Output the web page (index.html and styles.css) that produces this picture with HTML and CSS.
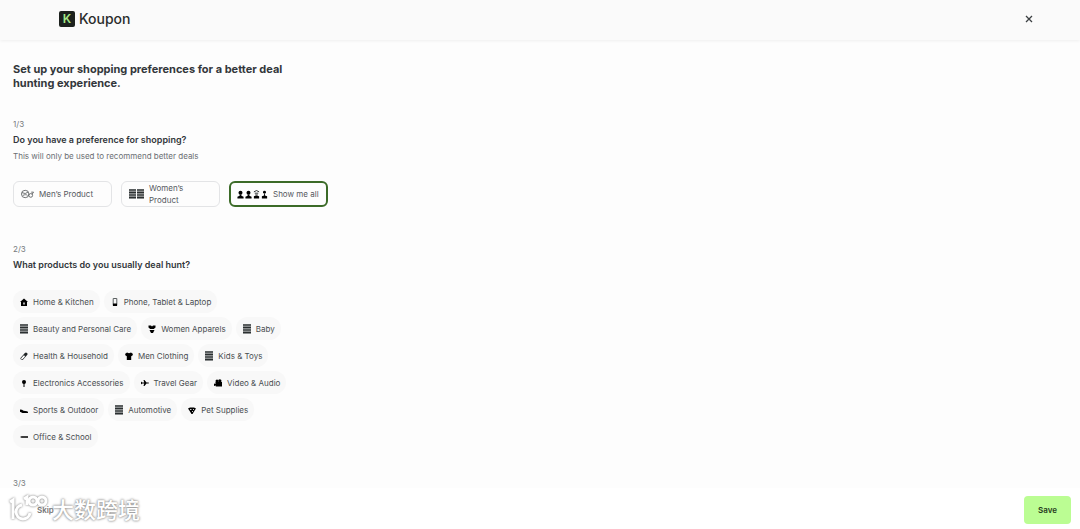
FILE: index.html
```html
<!DOCTYPE html>
<html lang="en">
<head>
    <meta charset="UTF-8">
    <meta name="viewport" content="width=device-width, initial-scale=1.0">
    <title>Koupon - Shopping preferences</title>
    <link rel="stylesheet" href="styles.css">
</head>
<body>
    <!-- shared icons -->
    <svg class="sprite" aria-hidden="true">
        <symbol id="stack" viewBox="0 0 8 10">
            <rect width="8" height="10" fill="#8b8e8f"/>
            <path d="M0 1h8M0 3.500h8M0 6h8M0 8.500h8" stroke="#2a2f30" stroke-width="1.2"/>
        </symbol>
        <symbol id="person" viewBox="0 0 8 10">
            <circle cx="4" cy="3" r="2.300"/>
            <path d="M3 5h2v1.500l2.500 1V9.500H.5v-2l2.500-1z"/>
        </symbol>
    </svg>

    <header class="header">
        <a class="logo" href="#">
            <svg class="logo-mark" viewBox="0 0 16 16" aria-hidden="true">
                <rect width="16" height="16" rx="2" fill="#1c211d"/>
                <text class="logo-letter" x="8" y="12" text-anchor="middle">K</text>
            </svg>
            <span class="logo-name">Koupon</span>
        </a>
        <button class="close" type="button" aria-label="Close">
            <svg viewBox="0 0 8 8"><path d="M1 1l6 6M7 1L1 7" stroke="#3c4043" stroke-width="1.3"/></svg>
        </button>
    </header>

    <main class="content">
        <h1>Set up your shopping preferences for a better deal hunting experience.</h1>

        <section class="step">
            <p class="count">1/3</p>
            <h2>Do you have a preference for shopping?</h2>
            <p class="note">This will only be used to recommend better deals</p>
            <div class="options">
                <button class="option" type="button">
                    <svg class="icon-men" viewBox="0 0 14 10" fill="none" stroke="#55595c" stroke-width="0.9">
                        <circle cx="4.500" cy="5" r="4"/>
                        <path d="M1 3.500l3.500 1 3-1.500M2 6.500c2-1 4-1 5 0"/>
                        <circle cx="10.500" cy="6.500" r="2"/>
                        <path d="M12 5.200L13.500 3M11 3h2.500"/>
                    </svg>
                    Men’s Product
                </button>
                <button class="option" type="button">
                    <span class="icon-pair">
                        <svg viewBox="0 0 8 10" preserveAspectRatio="none"><use href="#stack" width="8" height="10"/></svg>
                        <svg viewBox="0 0 8 10" preserveAspectRatio="none"><use href="#stack" width="8" height="10"/></svg>
                    </span>
                    <span>Women’s Product</span>
                </button>
                <button class="option selected" type="button">
                    <span class="icon-people">
                        <svg><use href="#person"/></svg>
                        <svg><use href="#person"/></svg>
                        <svg viewBox="0 0 8 10"><path d="M1 2l3-1.500L7 2M2 3.500h4M2.500 5.500h3" stroke="#171c1d" fill="none"/><path d="M1 9.500V7l3-1 3 1v2.500z"/></svg>
                        <svg viewBox="0 0 8 10"><circle cx="4" cy="2.500" r="1.700"/><path d="M3.500 4h1v2L7 7v2.500H1V7l2.500-1z"/></svg>
                    </span>
                    Show me all
                </button>
            </div>
        </section>

        <section class="step">
            <p class="count">2/3</p>
            <h2>What products do you usually deal hunt?</h2>
            <div class="chips">
                <button class="chip" type="button">
                    <svg class="icon" viewBox="0 0 8 10"><path fill-rule="evenodd" d="M4 1.500L0 5h1v4h6V5h1zM3.300 5.500h1.400v2H3.300z"/></svg>
                    Home &amp; Kitchen
                </button>
                <button class="chip" type="button">
                    <svg class="icon" viewBox="0 0 8 10"><path d="M2.200 1.500h3.600v7H2.200z" fill="none" stroke="#5b6061"/><path d="M2 6.500h4V9H2z"/></svg>
                    Phone, Tablet &amp; Laptop
                </button>
                <button class="chip" type="button">
                    <svg class="icon"><use href="#stack"/></svg>
                    Beauty and Personal Care
                </button>
                <button class="chip" type="button">
                    <svg class="icon" viewBox="0 0 8 10"><path d="M.5 1.500h2.500l1 1 1-1h2.500v2L5.800 5H2.200L.5 3.500zM1.500 6h5L5 9H3z"/></svg>
                    Women Apparels
                </button>
                <button class="chip" type="button">
                    <svg class="icon"><use href="#stack"/></svg>
                    Baby
                </button>
                <button class="chip" type="button">
                    <svg class="icon" viewBox="0 0 8 10"><path d="M2 7.500L6 3" stroke="#1f2425" stroke-width="3" stroke-linecap="round"/><path d="M2 7.500l2-2.200" stroke="#fff" stroke-width="1.800" stroke-linecap="round"/></svg>
                    Health &amp; Household
                </button>
                <button class="chip" type="button">
                    <svg class="icon" viewBox="0 0 8 10"><path d="M2 1.500l2 .8 2-.8L8 3 7 5.200l-.8-.4V9H1.800V4.800l-.8.4L0 3z"/></svg>
                    Men Clothing
                </button>
                <button class="chip" type="button">
                    <svg class="icon"><use href="#stack"/></svg>
                    Kids &amp; Toys
                </button>
                <button class="chip" type="button">
                    <svg class="icon" viewBox="0 0 8 10"><circle cx="4" cy="4" r="2"/><path d="M3.500 5h1v4h-1z"/></svg>
                    Electronics Accessories
                </button>
                <button class="chip" type="button">
                    <svg class="icon" viewBox="0 0 8 10"><path d="M0 3.500l1.200 1h2L2.500 2h1l2 2.500h2L8 5l-.5.600h-2l-2 2.500h-1l.7-2.500h-2L0 6.500z"/></svg>
                    Travel Gear
                </button>
                <button class="chip" type="button">
                    <svg class="icon" viewBox="0 0 8 10"><circle cx="3" cy="3" r="1.500"/><circle cx="5.800" cy="3" r="1.700"/><path d="M0 5.500l1.500.5V4H8v4.500H1.800V7.500L0 8z"/></svg>
                    Video &amp; Audio
                </button>
                <button class="chip" type="button">
                    <svg class="icon" viewBox="0 0 8 10"><path d="M0 4.500l2 .3 1.500 1L7 6.300c1 .3 1 .9 1 1.700H2.500L0 6.800z"/></svg>
                    Sports &amp; Outdoor
                </button>
                <button class="chip" type="button">
                    <svg class="icon"><use href="#stack"/></svg>
                    Automotive
                </button>
                <button class="chip" type="button">
                    <svg class="icon" viewBox="0 0 8 10"><path d="M0 3.500l2-1h4l2 1-1.500 2.300L4.500 9h-1L1.500 5.800z"/><path d="M2 4.500h1.500M5 4.500h1M4 6.500h1" stroke="#fff" stroke-width="0.8"/></svg>
                    Pet Supplies
                </button>
                <button class="chip" type="button">
                    <svg class="icon" viewBox="0 0 8 10"><path d="M0 5l1.500-.7H8v1.500H1.500z"/></svg>
                    Office &amp; School
                </button>
            </div>
        </section>

        <section class="step">
            <p class="count">3/3</p>
        </section>
    </main>

    <footer class="footer">
        <button class="skip" type="button">Skip</button>
        <button class="save" type="button">Save</button>
    </footer>

    <div class="watermark">
        <svg viewBox="0 0 40 28" fill="none" stroke="#fff" stroke-width="3" aria-hidden="true">
            <path d="M2 8l3-2v19M14 11a7 7 0 1 0 8 8M16 5l3-2v8"/>
            <circle cx="25" cy="7" r="4"/>
            <circle cx="34" cy="7" r="4"/>
        </svg>
        <span lang="zh">大数跨境</span>
    </div>
</body>
</html>
```
FILE: styles.css
```css
* { box-sizing: border-box; }
body { font-family: Inter, "Liberation Sans", sans-serif; font-size: 8px; line-height: 12px; color: #33373b; margin: 0; height: 100vh; display: flex; flex-direction: column; background: #fdfdfd; }
h1, h2, p { margin: 0; }
button { font: inherit; color: inherit; border: none; background: none; padding: 0; cursor: pointer; }
svg { display: block; flex: none; }
.sprite { position: absolute; width: 0; height: 0; }

.header { display: flex; justify-content: space-between; align-items: center; padding: 11px 47px 13px 59px; background: #fafafa; box-shadow: 0 1px 3px rgba(0, 0, 0, 0.06); }
.logo { display: flex; align-items: center; gap: 4px; color: #2a2d2b; text-decoration: none; }
.logo-mark { width: 16px; height: 16px; }
.logo-letter { font-size: 12px; font-weight: 600; fill: #a5e887; }
.logo-name { font-size: 14px; font-weight: 500; line-height: 16px; }
.close svg { width: 8px; height: 8px; }

.content { flex: 1; min-height: 0; overflow: hidden; padding: 22px 13px 0; }
h1 { max-width: 290px; font-size: 11px; font-weight: 700; line-height: 14px; margin-bottom: 28px; }
h2 { font-size: 9px; font-weight: 600; line-height: 20px; }
.step { margin-bottom: 36px; }
.count { color: #777b7e; }
.note { color: #6b6f73; }

.options { display: flex; gap: 9px; margin-top: 19px; }
.option { display: flex; align-items: center; gap: 5px; width: 99px; height: 26px; padding: 0 7px; border: 1px solid #e3e4e6; border-radius: 6px; color: #55595e; text-align: left; }
.option.selected { border: 2px solid #3c6b28; padding: 0 6px; }
.icon-men { width: 13px; height: 10px; }
.icon-pair { display: flex; gap: 1px; }
.icon-pair svg { width: 7px; height: 10px; }
.icon-people { display: flex; gap: 1px; }
.icon-people svg { width: 7px; height: 9px; }

.chips { display: flex; flex-wrap: wrap; gap: 4px; max-width: 290px; margin: 15px 0 -7px; }
.chip { display: flex; align-items: center; gap: 5px; height: 23px; padding: 0 6px 0 7px; border-radius: 12px; background: #f8f8f8; color: #4a4e51; }
.icon { width: 8px; height: 10px; }

.footer { display: flex; justify-content: space-between; align-items: center; padding: 8px 9px 5px 37px; background: #fff; }
.skip { position: relative; z-index: 1; font-weight: 600; color: #777; }
.save { padding: 8px 14px; border-radius: 4px; background: #bbfd93; font-weight: 600; color: #263a1d; }

.watermark { position: absolute; left: 8px; bottom: 7px; display: flex; align-items: center; gap: 4px; pointer-events: none; font-family: "Noto Sans CJK SC", sans-serif; font-size: 22px; font-weight: 500; line-height: 28px; color: #fff; text-shadow: 0 0 2px #888, 0 0 3px #999; }
.watermark svg { width: 40px; height: 28px; filter: drop-shadow(0 0 1px #777); }
```
